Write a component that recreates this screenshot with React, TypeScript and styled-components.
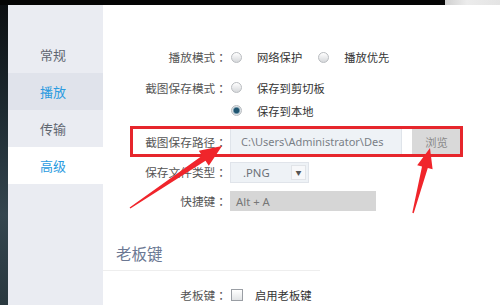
import styled, { createGlobalStyle } from "styled-components";

const GlobalStyle = createGlobalStyle`
  html, body {
    margin: 0;
    padding: 0;
    width: 500px;
    height: 305px;
    overflow: hidden;
    background: #fff;
  }
  body {
    font-family: "Noto Sans", "Noto Sans CJK SC", sans-serif;
  }
`;

const Page = styled.div`
  position: relative;
  display: flex;
  flex-direction: column;
  width: 500px;
  height: 305px;
`;

const TopBar = styled.div`
  display: flex;
  height: 5px;
  flex-shrink: 0;
`;

const TopBlack = styled.div`
  flex: 1;
  background: #050505;
`;

const TopRight = styled.div`
  width: 55px;
  background: linear-gradient(90deg, #cfcfcf, #ececec 40%, #e4e4e4);
`;

const Body = styled.div`
  display: flex;
  flex: 1;
  min-height: 0;
`;

const Desktop = styled.div`
  width: 8px;
  background: linear-gradient(180deg, #0c0f12 0%, #1d2a31 35%, #34454e 70%, #2a3940 100%);
`;

const Sidebar = styled.nav`
  width: 95px;
  padding-top: 31px;
  background: #eaecf2;
  display: flex;
  flex-direction: column;
`;

const NavItem = styled.div<{ $active?: boolean; $hover?: boolean }>`
  height: 37px;
  display: flex;
  align-items: center;
  padding-left: 32px;
  font-size: 13px;
  color: ${(p) => (p.$active || p.$hover ? "#2b9be0" : "#5f6670")};
  background: ${(p) => (p.$active ? "#ffffff" : p.$hover ? "#e0e3eb" : "transparent")};
`;

const Main = styled.main`
  flex: 1;
  display: flex;
  flex-direction: column;
  padding-top: 40px;
  font-size: 11.3px;
  color: #444;
`;

const Row = styled.div<{ $h?: number; $mt?: number; $boxed?: boolean; $top?: boolean }>`
  position: relative;
  display: grid;
  grid-template-columns: 124px 1fr;
  column-gap: 3px;
  align-items: ${(p) => (p.$top ? "start" : "center")};
  height: ${(p) => p.$h ?? 24}px;
  margin-top: ${(p) => p.$mt ?? 0}px;

  ${(p) =>
    p.$boxed &&
    `
    &::after {
      content: "";
      position: absolute;
      left: 27px;
      right: 37px;
      top: -2px;
      bottom: -2px;
      border: 3px solid #e6262c;
      pointer-events: none;
    }
  `}
`;

const Label = styled.div`
  text-align: right;
  line-height: 23px;
  font-size: 11.7px;
  color: #555;
  white-space: nowrap;

  &::after {
    content: "：";
    font-family: "Noto Sans CJK JP", sans-serif;
  }
`;

const Controls = styled.div<{ $column?: boolean }>`
  display: flex;
  flex-direction: ${(p) => (p.$column ? "column" : "row")};
  align-items: ${(p) => (p.$column ? "flex-start" : "center")};
  height: 100%;
`;

const Option = styled.label`
  display: flex;
  align-items: center;
  height: 23px;
  margin-right: 15px;
  color: #333;
`;

const Radio = styled.span<{ $checked?: boolean }>`
  box-sizing: border-box;
  width: 11px;
  height: 11px;
  margin-left: 1px;
  margin-right: 15px;
  border-radius: 50%;
  border: 1px solid #b9bcc0;
  background: ${(p) =>
    p.$checked
      ? "radial-gradient(circle, #1f5570 0 2.5px, #6f94a8 3px, #dde3e7 4px)"
      : "linear-gradient(180deg, #ffffff, #d6d8db)"};
`;

const Checkbox = styled.span`
  box-sizing: border-box;
  width: 12px;
  height: 12px;
  margin-left: 1px;
  margin-right: 12px;
  border: 1px solid #9a9ea4;
  background: linear-gradient(180deg, #ffffff, #e2e4e6);
`;

const PathInput = styled.div`
  box-sizing: border-box;
  width: 172px;
  height: 27px;
  padding-left: 10px;
  display: flex;
  align-items: center;
  overflow: hidden;
  white-space: nowrap;
  background: #eef2f6;
  border: 1px solid #dfe4ea;
  color: #7a7f86;
  font-size: 11px;
`;

const Button = styled.div`
  width: 49px;
  height: 25px;
  margin-left: 10px;
  display: flex;
  align-items: center;
  justify-content: center;
  background: #d9d9d9;
  color: #8a8a8a;
`;

const Select = styled.div`
  box-sizing: border-box;
  width: 79px;
  height: 21px;
  padding-left: 12px;
  padding-right: 2px;
  display: flex;
  align-items: center;
  justify-content: space-between;
  background: #eef2f6;
  border: 1px solid #e0e4ea;
  color: #6c7178;
`;

const Caret = styled.span`
  box-sizing: border-box;
  width: 15px;
  height: 15px;
  display: flex;
  align-items: center;
  justify-content: center;
  background: #f7f8fa;
  border: 1px solid #e1e4e8;
  color: #555;
  font-size: 6px;
`;

const KeyInput = styled.div`
  box-sizing: border-box;
  width: 146px;
  height: 20px;
  padding-left: 6px;
  display: flex;
  align-items: center;
  background: #d6d6d6;
  color: #777;
`;

const SectionTitle = styled.h2`
  width: 204px;
  margin: 29px 0 0;
  padding: 0 0 4px 13px;
  height: 24px;
  line-height: 24px;
  font-size: 15.5px;
  font-weight: normal;
  color: #6b7893;
  border-bottom: 1px solid #eeeeee;
`;

const Overlay = styled.svg`
  position: absolute;
  left: 0;
  top: 0;
  pointer-events: none;
`;

export default function App() {
  return (
    <Page>
      <GlobalStyle />
      <TopBar>
        <TopBlack />
        <TopRight />
      </TopBar>
      <Body>
        <Desktop />
        <Sidebar>
          <NavItem>常规</NavItem>
          <NavItem $hover>播放</NavItem>
          <NavItem>传输</NavItem>
          <NavItem $active>高级</NavItem>
        </Sidebar>
        <Main>
          <Row>
            <Label>播放模式</Label>
            <Controls>
              <Option>
                <Radio />
                网络保护
              </Option>
              <Option>
                <Radio />
                播放优先
              </Option>
            </Controls>
          </Row>
          <Row $h={46} $mt={7} $top>
            <Label>截图保存模式</Label>
            <Controls $column>
              <Option>
                <Radio />
                保存到剪切板
              </Option>
              <Option>
                <Radio $checked />
                保存到本地
              </Option>
            </Controls>
          </Row>
          <Row $h={28} $mt={6} $boxed>
            <Label>截图保存路径</Label>
            <Controls>
              <PathInput>C:\Users\Administrator\Des</PathInput>
              <Button>浏览</Button>
            </Controls>
          </Row>
          <Row $mt={5}>
            <Label>保存文件类型</Label>
            <Controls>
              <Select>
                .PNG
                <Caret>▼</Caret>
              </Select>
            </Controls>
          </Row>
          <Row $mt={5}>
            <Label>快捷键</Label>
            <Controls>
              <KeyInput>Alt + A</KeyInput>
            </Controls>
          </Row>
          <SectionTitle>老板键</SectionTitle>
          <Row $mt={12}>
            <Label>老板键</Label>
            <Controls>
              <Option>
                <Checkbox />
                启用老板键
              </Option>
            </Controls>
          </Row>
        </Main>
      </Body>
      <Overlay width="500" height="305" viewBox="0 0 500 305">
        <polygon
          fill="#f0252b"
          points="129.6,207.4 202.1,155.8 198.8,150.8 222,146 208.8,165.8 205.5,160.8 130.4,208.6"
        />
        <polygon
          fill="#f0252b"
          points="412.3,212.8 422,166.5 417.2,165.3 430,148 432.6,169.3 427.8,168.1 413.7,213.2"
        />
      </Overlay>
    </Page>
  );
}
